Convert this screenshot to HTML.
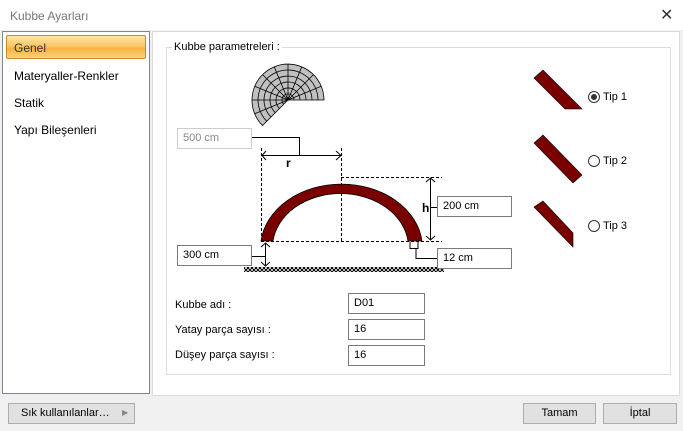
<!DOCTYPE html>
<html><head><meta charset="utf-8"><style>
body{margin:0;width:683px;height:431px;overflow:hidden;background:#f0f0f0;font-family:"Liberation Sans",sans-serif;font-size:11px;color:#000;position:relative}
.a{position:absolute}
.inp{position:absolute;background:#fff;border:1px solid #7a7a7a;box-sizing:border-box;padding:3px 5px;font-size:11px}
.btn{position:absolute;background:#e1e1e1;border:1px solid #adadad;box-sizing:border-box;text-align:center;line-height:18px;font-size:11px}
</style></head><body>
<div class="a" style="left:0;top:0;width:683px;height:30px;background:#fff"></div>
<div class="a" style="left:10px;top:9px;font-size:12px;color:#777">Kubbe Ayarları</div>
<div class="a" style="left:660px;top:5px;font-size:16px;color:#333">✕</div>
<div class="a" style="left:2px;top:31px;width:148px;height:363px;background:#fff;border:1px solid #828790;box-sizing:border-box"></div>
<div class="a" style="left:6px;top:35px;width:140px;height:24px;border:1px solid #c98a2c;border-radius:2px;box-sizing:border-box;background:linear-gradient(#fde4a8,#f9c35f 50%,#f7b13e 55%,#fcd27e)"></div>
<div class="a" style="left:14px;top:41px;font-size:12px;color:#333">Genel</div>
<div class="a" style="left:14px;top:69px;font-size:12px">Materyaller-Renkler</div>
<div class="a" style="left:14px;top:96px;font-size:12px">Statik</div>
<div class="a" style="left:14px;top:123px;font-size:12px">Yapı Bileşenleri</div>
<div class="a" style="left:152px;top:31px;width:528px;height:365px;background:#fff;border:1px solid #dcdcdc;box-sizing:border-box"></div>
<div class="a" style="left:166px;top:47px;width:505px;height:328px;border:1px solid #dcdcdc;box-sizing:border-box"></div>
<div class="a" style="left:172px;top:41px;background:#fff;padding:0 2px">Kubbe parametreleri :</div>
<svg class="a" style="left:0;top:0" width="683" height="431">
<defs><pattern id="h" width="4" height="4" patternUnits="userSpaceOnUse"><rect width="4" height="4" fill="#fff"/><path d="M0 4L4 0M0 0L4 4" stroke="#000" stroke-width="1"/></pattern></defs>
<g transform="translate(288,100)" stroke="#000" stroke-width="0.8" fill="#c0c0c0">
<path d="M0 0L36 0A36 36 0 1 0 -25.5 25.5Z"/>
<g fill="none">
<path d="M6 0A6 6 0 1 0 -4.2 4.2M12 0A12 12 0 1 0 -8.5 8.5M18 0A18 18 0 1 0 -12.7 12.7M24 0A24 24 0 1 0 -17 17M30 0A30 30 0 1 0 -21.2 21.2"/>
<path d="M0 0L33.3 -13.8M0 0L25.5 -25.5M0 0L13.8 -33.3M0 0L0 -36M0 0L-13.8 -33.3M0 0L-25.5 -25.5M0 0L-33.3 -13.8M0 0L-36 0M0 0L-33.3 13.8"/>
</g></g>
<path d="M261 241A81 64 0 0 1 422 241L408 241A68 54 0 0 0 273 241Z" fill="#7a0000" stroke="#000" stroke-width="0.8"/>
<g stroke="#000" stroke-width="1" stroke-dasharray="3,2" fill="none">
<path d="M261.5 148V241M341.5 148V241M341 177.5H442M261 241.5H442"/>
</g>
<g stroke="#000" stroke-width="1" fill="none">
<path d="M252 137.5H299.5V155"/>
<path d="M262 155.5H341M266 151L262 155.5L266 160M336 151L341 155.5L336 160"/>
<path d="M430.5 178V240M426 182L430.5 178L435 182M426 236L430.5 240L435 236M431 207.5H437"/>
<path d="M265.5 243V266M261 247L265.5 243L270 247M261 262L265.5 266L270 262M252 256.5H265"/>
<path d="M410 242V248.5H418V242M416 248V258.5H437"/>
</g>
<rect x="244" y="267" width="200" height="5" fill="url(#h)"/>
<text x="286" y="167" font-family="Liberation Sans" font-weight="bold" font-size="12">r</text>
<text x="422" y="212" font-family="Liberation Sans" font-weight="bold" font-size="12">h</text>
<g fill="#7a0000" stroke="#000" stroke-width="0.6">
<path d="M534 78L543 70L582 109L565 109Z"/>
<path d="M534 143L543 135L582 175L573 183Z"/>
<path d="M534 207L543 201L573 233L573 247Z"/>
</g>
<g fill="#fff" stroke="#333" stroke-width="1">
<circle cx="594" cy="97" r="5.5"/><circle cx="594" cy="161" r="5.5"/><circle cx="594" cy="226" r="5.5"/>
</g>
<circle cx="594" cy="97" r="3" fill="#333"/>
</svg>
<div class="a" style="left:603px;top:91px">Tip 1</div>
<div class="a" style="left:603px;top:155px">Tip 2</div>
<div class="a" style="left:603px;top:220px">Tip 3</div>
<div class="inp" style="left:177px;top:128px;width:75px;height:21px;color:#888;border-color:#ccc">500 cm</div>
<div class="inp" style="left:437px;top:196px;width:75px;height:21px">200 cm</div>
<div class="inp" style="left:177px;top:245px;width:75px;height:21px">300 cm</div>
<div class="inp" style="left:437px;top:248px;width:75px;height:21px">12 cm</div>
<div class="a" style="left:175px;top:299px">Kubbe adı :</div>
<div class="a" style="left:175px;top:324px">Yatay parça sayısı :</div>
<div class="a" style="left:175px;top:349px">Düşey parça sayısı :</div>
<div class="inp" style="left:348px;top:293px;width:77px;height:21px">D01</div>
<div class="inp" style="left:348px;top:319px;width:77px;height:21px">16</div>
<div class="inp" style="left:348px;top:345px;width:77px;height:21px">16</div>
<div class="btn" style="left:8px;top:403px;width:127px;height:21px;text-align:left;padding-left:12px">Sık kullanılanlar…<span style="position:absolute;left:113px;color:#888;font-size:8px">▶</span></div>
<div class="btn" style="left:523px;top:403px;width:73px;height:21px">Tamam</div>
<div class="btn" style="left:603px;top:403px;width:74px;height:21px">İptal</div>
</body></html>
